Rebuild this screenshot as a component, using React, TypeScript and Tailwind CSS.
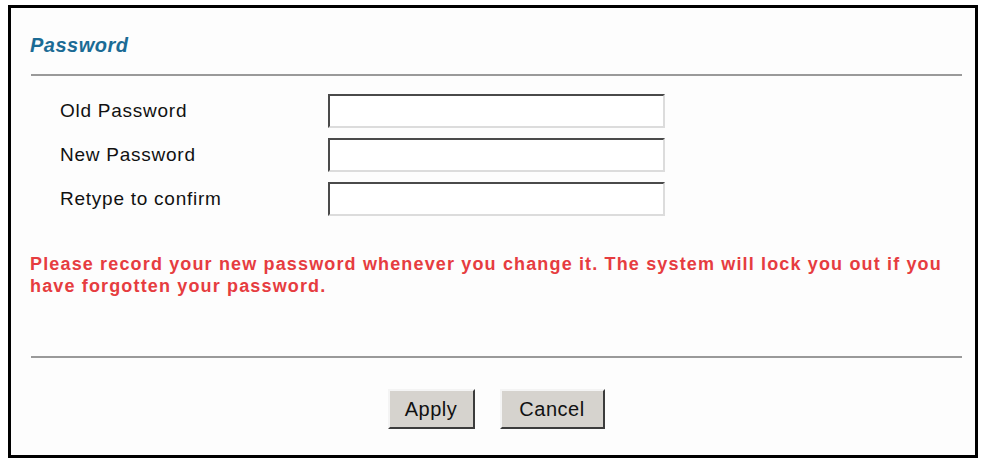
import React from "react";

const fields = ["Old Password", "New Password", "Retype to confirm"];

function Field({ label }: { label: string }) {
  return (
    <div className="flex items-center h-[34px]">
      <div className="w-[268px] pl-[49px] box-content text-[19px] tracking-[0.75px] text-[#111]">{label}</div>
      <input
        type="password"
        className="w-[337px] h-[34px] bg-white border-2 border-t-[#4a4a4a] border-l-[#4a4a4a] border-b-[#dcdcdc] border-r-[#dcdcdc] outline-none"
      />
    </div>
  );
}

function Btn({ children, w }: { children: React.ReactNode; w: string }) {
  return (
    <button
      className={`${w} h-[40px] bg-[#d6d3ce] text-[20px] tracking-[0.5px] text-[#111] border-2 border-t-[#f4f4f4] border-l-[#f4f4f4] border-b-[#3c3c3c] border-r-[#3c3c3c]`}
    >
      {children}
    </button>
  );
}

export default function App() {
  return (
    <div
      className="w-[982px] h-[462px] bg-white pt-[5px] pl-[8px]"
      style={{ fontFamily: '"Liberation Sans", Arial, sans-serif' }}
    >
      <div className="w-[970px] h-[453px] border-[3px] border-black bg-[#fdfdfd] flex flex-col">
        <div className="mt-[25px] ml-[19px] h-[24px] leading-[24px] text-[20px] font-bold italic tracking-[0.5px] text-[#1b6b95]">
          Password
        </div>
        <div className="mt-[17px] ml-[20px] w-[931px] h-[2px] bg-[#9a9a9a]" />
        <div className="mt-[18px] flex flex-col gap-[10px]">
          {fields.map((f) => (
            <Field key={f} label={f} />
          ))}
        </div>
        <p className="mt-[37px] ml-[19px] w-[940px] text-[18px] leading-[22px] font-bold tracking-[1.15px] text-[#e63c40] whitespace-nowrap">
          Please record your new password whenever you change it. The system will lock you out if you
          <br />
          have forgotten your password.
        </p>
        <div className="mt-[59px] ml-[20px] w-[931px] h-[2px] bg-[#9a9a9a]" />
        <div className="mt-[31px] flex justify-center gap-[25px] pl-[6px]">
          <Btn w="w-[87px]">Apply</Btn>
          <Btn w="w-[105px]">Cancel</Btn>
        </div>
      </div>
    </div>
  );
}
